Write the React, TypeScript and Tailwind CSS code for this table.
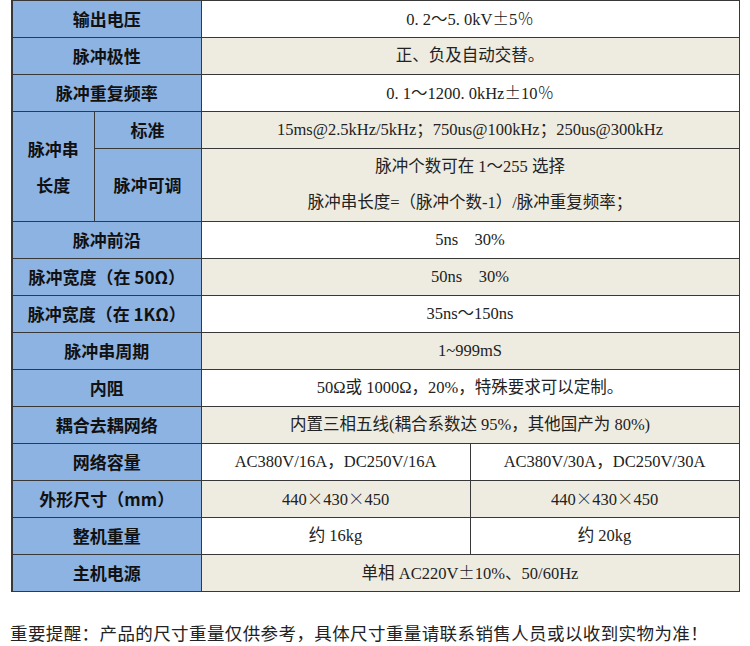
import React from "react";

const L =
  "bg-[#8db3e2] border-[1.5px] border-[#383838] text-center font-bold text-[17px] text-[#111] px-0 font-['Noto_Sans_CJK_SC',sans-serif]";
const V =
  "border-[1.5px] border-[#383838] text-center text-[16.5px] text-[#222] font-['Liberation_Serif','Noto_Sans_CJK_SC',serif]";
const W = "bg-white";
const B = "bg-[#eeece1]";

type Row = { label: string; value?: string; v1?: string; v2?: string; bg: string };

const rowsA: Row[] = [
  { label: "输出电压", value: "0. 2～5. 0kV±5％", bg: W },
  { label: "脉冲极性", value: "正、负及自动交替。", bg: B },
  { label: "脉冲重复频率", value: "0. 1～1200. 0kHz±10％", bg: W },
];

const rowsB: Row[] = [
  { label: "脉冲前沿", value: "5ns\u00a0\u00a0\u00a0\u00a030%", bg: W },
  { label: "脉冲宽度（在 50Ω）", value: "50ns\u00a0\u00a0\u00a0\u00a030%", bg: B },
  { label: "脉冲宽度（在 1KΩ）", value: "35ns～150ns", bg: W },
  { label: "脉冲串周期", value: "1~999mS", bg: B },
  { label: "内阻", value: "50Ω或 1000Ω，20%，特殊要求可以定制。", bg: W },
  { label: "耦合去耦网络", value: "内置三相五线(耦合系数达 95%，其他国产为 80%)", bg: B },
  { label: "网络容量", v1: "AC380V/16A，DC250V/16A", v2: "AC380V/30A，DC250V/30A", bg: W },
  { label: "外形尺寸（mm）", v1: "440×430×450", v2: "440×430×450", bg: B },
  { label: "整机重量", v1: "约 16kg", v2: "约 20kg", bg: W },
  { label: "主机电源", value: "单相 AC220V±10%、50/60Hz", bg: B },
];

function T({ s }: { s: string }) {
  const parts = s.split(/([±×％])/);
  return (
    <>
      {parts.map((p, i) =>
        p === "±" || p === "×" || p === "％" ? (
          <span key={i} className="font-light font-['Noto_Sans_CJK_SC',sans-serif]">
            {p}
          </span>
        ) : (
          <React.Fragment key={i}>{p}</React.Fragment>
        )
      )}
    </>
  );
}

function R({ r }: { r: Row }) {
  return (
    <tr className="h-[37px]">
      <td colSpan={2} className={L}>
        {r.label}
      </td>
      {r.value !== undefined ? (
        <td colSpan={2} className={`${V} ${r.bg}`}>
          <T s={r.value} />
        </td>
      ) : (
        <>
          <td className={`${V} ${r.bg}`}>
            <T s={r.v1 || ""} />
          </td>
          <td className={`${V} ${r.bg}`}>
            <T s={r.v2 || ""} />
          </td>
        </>
      )}
    </tr>
  );
}

export default function App() {
  return (
    <div className="w-[750px] h-[646px] bg-white overflow-hidden">
      <div className="pl-[11px]">
        <table className="border-collapse table-fixed w-[727px] border-l-2 border-[#383838]">
          <colgroup>
            <col className="w-[82px]" />
            <col className="w-[107px]" />
            <col className="w-[269px]" />
            <col className="w-[269px]" />
          </colgroup>
          <tbody>
            {rowsA.map((r) => (
              <R key={r.label} r={r} />
            ))}
            <tr className="h-[37px]">
              <td rowSpan={2} className={`${L} leading-[36px]`}>
                脉冲串
                <br />
                长度
              </td>
              <td className={L}>标准</td>
              <td colSpan={2} className={`${V} ${B}`}>
                15ms@2.5kHz/5kHz；750us@100kHz；250us@300kHz
              </td>
            </tr>
            <tr className="h-[72px]">
              <td className={L}>脉冲可调</td>
              <td colSpan={2} className={`${V} ${B} leading-[36px]`}>
                脉冲个数可在 1～255 选择
                <br />
                脉冲串长度=（脉冲个数-1）/脉冲重复频率；
              </td>
            </tr>
            {rowsB.map((r) => (
              <R key={r.label} r={r} />
            ))}
          </tbody>
        </table>
      </div>
      <div className="mt-[34px] pl-[10px] text-[17.5px] text-[#222] leading-none tracking-[0.4px] font-['Liberation_Serif','Noto_Sans_CJK_SC',serif]">
        重要提醒：产品的尺寸重量仅供参考，具体尺寸重量请联系销售人员或以收到实物为准！
      </div>
    </div>
  );
}
